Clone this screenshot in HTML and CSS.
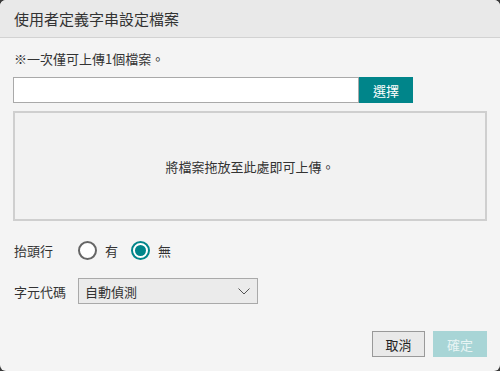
FILE: index.html
```html
<!DOCTYPE html>
<html lang="zh-Hant">
<head>
  <meta charset="UTF-8" />
  <title>使用者定義字串設定檔案</title>
  <link rel="stylesheet" href="styles.css">
</head>
<body>
  <div class="dialog">
    <div class="dialog-head">使用者定義字串設定檔案</div>
    <div class="dialog-body">
      <p class="note">※一次僅可上傳1個檔案。</p>
      <div class="file-row">
        <input type="text" class="file-name" readonly>
        <button class="pick-btn">選擇</button>
      </div>
      <div class="drop-zone">將檔案拖放至此處即可上傳。</div>

      <div class="field">
        <span class="field-label">抬頭行</span>
        <label class="radio"><span class="radio-dot"></span>有</label>
        <label class="radio checked"><span class="radio-dot"></span>無</label>
      </div>

      <div class="field">
        <span class="field-label">字元代碼</span>
        <div class="select">
          <span>自動偵測</span>
          <svg width="12" height="7" viewBox="0 0 12 7"><path d="M0.5 0.5 L6 6 L11.5 0.5" fill="none" stroke="#555" stroke-width="1"/></svg>
        </div>
      </div>
    </div>
    <div class="dialog-foot">
      <button class="btn">取消</button>
      <button class="btn primary" disabled>確定</button>
    </div>
  </div>
</body>
</html>
```

FILE: styles.css
```css
html, body { margin: 0; background: #3a3a3a; }
body { font-family: "Noto Sans CJK TC", "Noto Sans", sans-serif; color: #333; font-size: 13px; }
.dialog { width: 500px; height: 371px; background: #f4f4f4; border-radius: 6px; overflow: hidden; display: flex; flex-direction: column; }
.dialog-head { height: 37px; line-height: 37px; padding-left: 14px; background: #e9e9e9; border-bottom: 1px solid #d2d2d2; font-size: 15px; color: #333; }
.dialog-body { padding: 0 13px; flex: 1; }
.note { margin: 11px 0 0 1px; line-height: 20px; height: 20px; }
.file-row { display: flex; margin-top: 8px; height: 26px; }
.file-name { width: 346px; margin: 0; box-sizing: border-box; height: 26px; border: 1px solid #a9a9a9; background: #fff; }
.pick-btn { width: 54px; height: 26px; border: none; background: #00858a; color: #fff; font-family: inherit; font-size: 13px; padding: 0; }
.drop-zone { margin-top: 8px; height: 106px; border: 2px solid #cfcfcf; background: #f2f2f2; display: flex; align-items: center; justify-content: center; }
.field { display: flex; align-items: center; margin-top: 19px; height: 20px; }
.field + .field { margin-top: 18px; height: 26px; }
.field-label { width: 64px; padding-left: 1px; }
.radio { display: flex; align-items: center; margin-right: 13px; }
.radio-dot { width: 19px; height: 19px; box-sizing: border-box; border: 2px solid #666; border-radius: 50%; margin-right: 8px; background: #fff; position: relative; }
.radio.checked .radio-dot { border-color: #00858a; }
.radio.checked .radio-dot::after { content: ""; position: absolute; left: 2px; top: 2px; width: 11px; height: 11px; border-radius: 50%; background: #00858a; }
.select { width: 180px; height: 26px; box-sizing: border-box; border: 1px solid #a9a9a9; background: #ebebeb; display: flex; align-items: center; justify-content: space-between; padding: 0 7px 0 6px; }
.dialog-foot { display: flex; justify-content: flex-end; gap: 8px; padding: 0 13px 14px; }
.btn { width: 53px; height: 26px; border: 1px solid #999; background: #e9e9e9; font-family: inherit; font-size: 13px; color: #222; padding: 0; }
.btn.primary { width: 54px; border: none; background: #a8d5d6; color: #e8f4f4; }
```
